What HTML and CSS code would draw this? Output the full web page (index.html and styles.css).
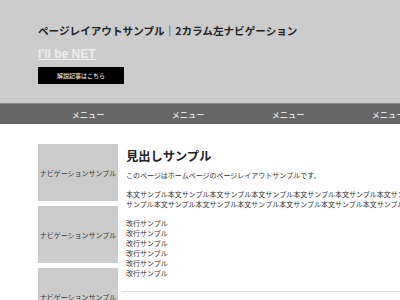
FILE: index.html
```html
<!DOCTYPE html>
<html lang="ja">
<head>
  <meta charset="UTF-8" />
  <meta name="viewport" content="width=device-width, initial-scale=1.0" />
  <title>ページレイアウトサンプル｜2カラム左ナビゲーション</title>
  <link rel="stylesheet" href="styles.css">
</head>
<body>
  <header class="site-header">
    <div class="wrap">
      <h1 class="site-title">ページレイアウトサンプル｜2カラム左ナビゲーション</h1>
      <a class="site-link" href="#">I'll be NET</a>
      <a class="article-btn" href="#">解説記事はこちら</a>
    </div>
  </header>

  <nav class="global-nav">
    <ul class="wrap">
      <li><a href="#">メニュー</a></li>
      <li><a href="#">メニュー</a></li>
      <li><a href="#">メニュー</a></li>
      <li><a href="#">メニュー</a></li>
    </ul>
  </nav>

  <div class="wrap main">
    <aside class="side-nav">
      <div class="side-item">ナビゲーションサンプル</div>
      <div class="side-item">ナビゲーションサンプル</div>
      <div class="side-item">ナビゲーションサンプル</div>
    </aside>

    <article class="content">
      <h2>見出しサンプル</h2>
      <p>このページはホームページのページレイアウトサンプルです。</p>
      <p>本文サンプル本文サンプル本文サンプル本文サンプル本文サンプル本文サンプル本文サンプル本文サンプル本文サンプル本文サンプル本文サンプル本文サンプル本文サンプル本文サンプル</p>
      <p>
        改行サンプル<br>
        改行サンプル<br>
        改行サンプル<br>
        改行サンプル<br>
        改行サンプル<br>
        改行サンプル
      </p>
    </article>
  </div>
</body>
</html>
```

FILE: styles.css
```css
    html, body {
      overflow: hidden;
    }

    body {
      margin: 0;
      background: #fff;
      color: #333;
      font-family: "Noto Sans CJK JP", "Liberation Sans", sans-serif;
    }

    .wrap {
      width: 400px;
      margin-left: 38px;
    }

    .site-header {
      background: #cccccc;
      padding: 24px 0 19px;
    }

    .site-title {
      margin: 0;
      font-size: 10.6px;
      line-height: 14px;
      color: #222;
      font-weight: 700;
      white-space: nowrap;
    }

    .site-link {
      display: inline-block;
      margin-top: 9px;
      font-family: "Liberation Sans", Arial, sans-serif;
      font-size: 12px;
      line-height: 14px;
      font-weight: 700;
      color: #eeeeee;
    }

    .article-btn {
      display: block;
      width: 86px;
      height: 17px;
      margin-top: 4px;
      background: #000;
      color: #fff;
      font-size: 6px;
      line-height: 17px;
      text-align: center;
      text-decoration: none;
    }

    .global-nav {
      background: #666666;
      border-top: 1px solid #8a8a8a;
    }

    .global-nav ul {
      display: flex;
      margin-top: 0;
      margin-bottom: 0;
      padding: 0;
      list-style: none;
    }

    .global-nav li {
      flex: 0 0 100px;
      text-align: center;
    }

    .global-nav a {
      display: block;
      height: 20px;
      line-height: 20px;
      font-size: 8.3px;
      color: #fff;
      text-decoration: none;
    }

    .main {
      display: flex;
      margin-top: 20px;
    }

    .side-nav {
      flex: 0 0 80px;
      display: flex;
      flex-direction: column;
      gap: 5px;
    }

    .side-item {
      height: 57px;
      background: #cccccc;
      display: flex;
      align-items: center;
      justify-content: center;
      font-size: 7px;
      color: #333;
      white-space: nowrap;
    }

    .content {
      flex: 1;
      margin-left: 4px;
      padding: 4px 0 4px 4px;
      border-bottom: 1px solid #dddddd;
      align-self: flex-start;
    }

    .content h2 {
      margin: 0 0 6px;
      font-size: 12.3px;
      line-height: 16px;
      color: #222;
      font-weight: 700;
    }

    .content p {
      margin: 0 0 9px;
      font-size: 7px;
      line-height: 10px;
    }
```
